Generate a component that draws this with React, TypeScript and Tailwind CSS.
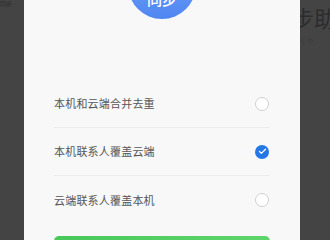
import { Check } from "lucide-react";

const options = [
  { label: "本机和云端合并去重", checked: false },
  { label: "本机联系人覆盖云端", checked: true },
  { label: "云端联系人覆盖本机", checked: false },
];

const font = {
  fontFamily: '"Noto Sans CJK SC", "Noto Sans", sans-serif',
};

export default function App() {
  return (
    <div
      className="flex h-[240px] w-[330px] overflow-hidden bg-[#444444]"
      style={font}
    >
      <div className="w-[24px] shrink-0 overflow-hidden">
        <p className="whitespace-nowrap text-[6px] leading-[7px] text-[#2c2c2c]">
          同步
        </p>
      </div>

      <div className="relative flex w-[276px] shrink-0 flex-col bg-[#f8f8f8] px-[30px] pt-[80px]">
        <div className="absolute left-[104px] top-[-49px] flex size-[68px] items-end justify-center rounded-full bg-gradient-to-b from-[#7aaaf8] to-[#4f86f1] pb-[13px]">
          <span className="text-[15px] font-medium leading-none text-white">
            同步
          </span>
        </div>

        {options.map((opt, i) => (
          <div
            key={opt.label}
            className={
              "flex h-[48px] shrink-0 items-center justify-between pr-[1px] " +
              (i < options.length - 1 ? "border-b border-[#ececec]" : "")
            }
          >
            <span className="text-[11px] tracking-[0.2px] text-[#555555]">
              {opt.label}
            </span>
            {opt.checked ? (
              <span className="flex size-[14px] items-center justify-center rounded-full bg-[#2378e6]">
                <Check className="size-[9px] text-white" strokeWidth={3.5} />
              </span>
            ) : (
              <span className="size-[14px] rounded-full border border-[#cfcfcf] bg-white" />
            )}
          </div>
        ))}

        <div className="mt-[12px] h-[36px] shrink-0 rounded-[5px] bg-gradient-to-r from-[#48c85a] to-[#5fd66c]" />
      </div>

      <div className="w-[30px] shrink-0 overflow-hidden">
        <p className="-ml-[8px] mt-[4px] whitespace-nowrap text-[22px] leading-[26px] text-[#2c2c2c]">
          步助
        </p>
        <p className="-ml-[2px] mt-[6px] whitespace-nowrap text-[7px] text-[#3a3a3a]">
          八 个
        </p>
      </div>
    </div>
  );
}
